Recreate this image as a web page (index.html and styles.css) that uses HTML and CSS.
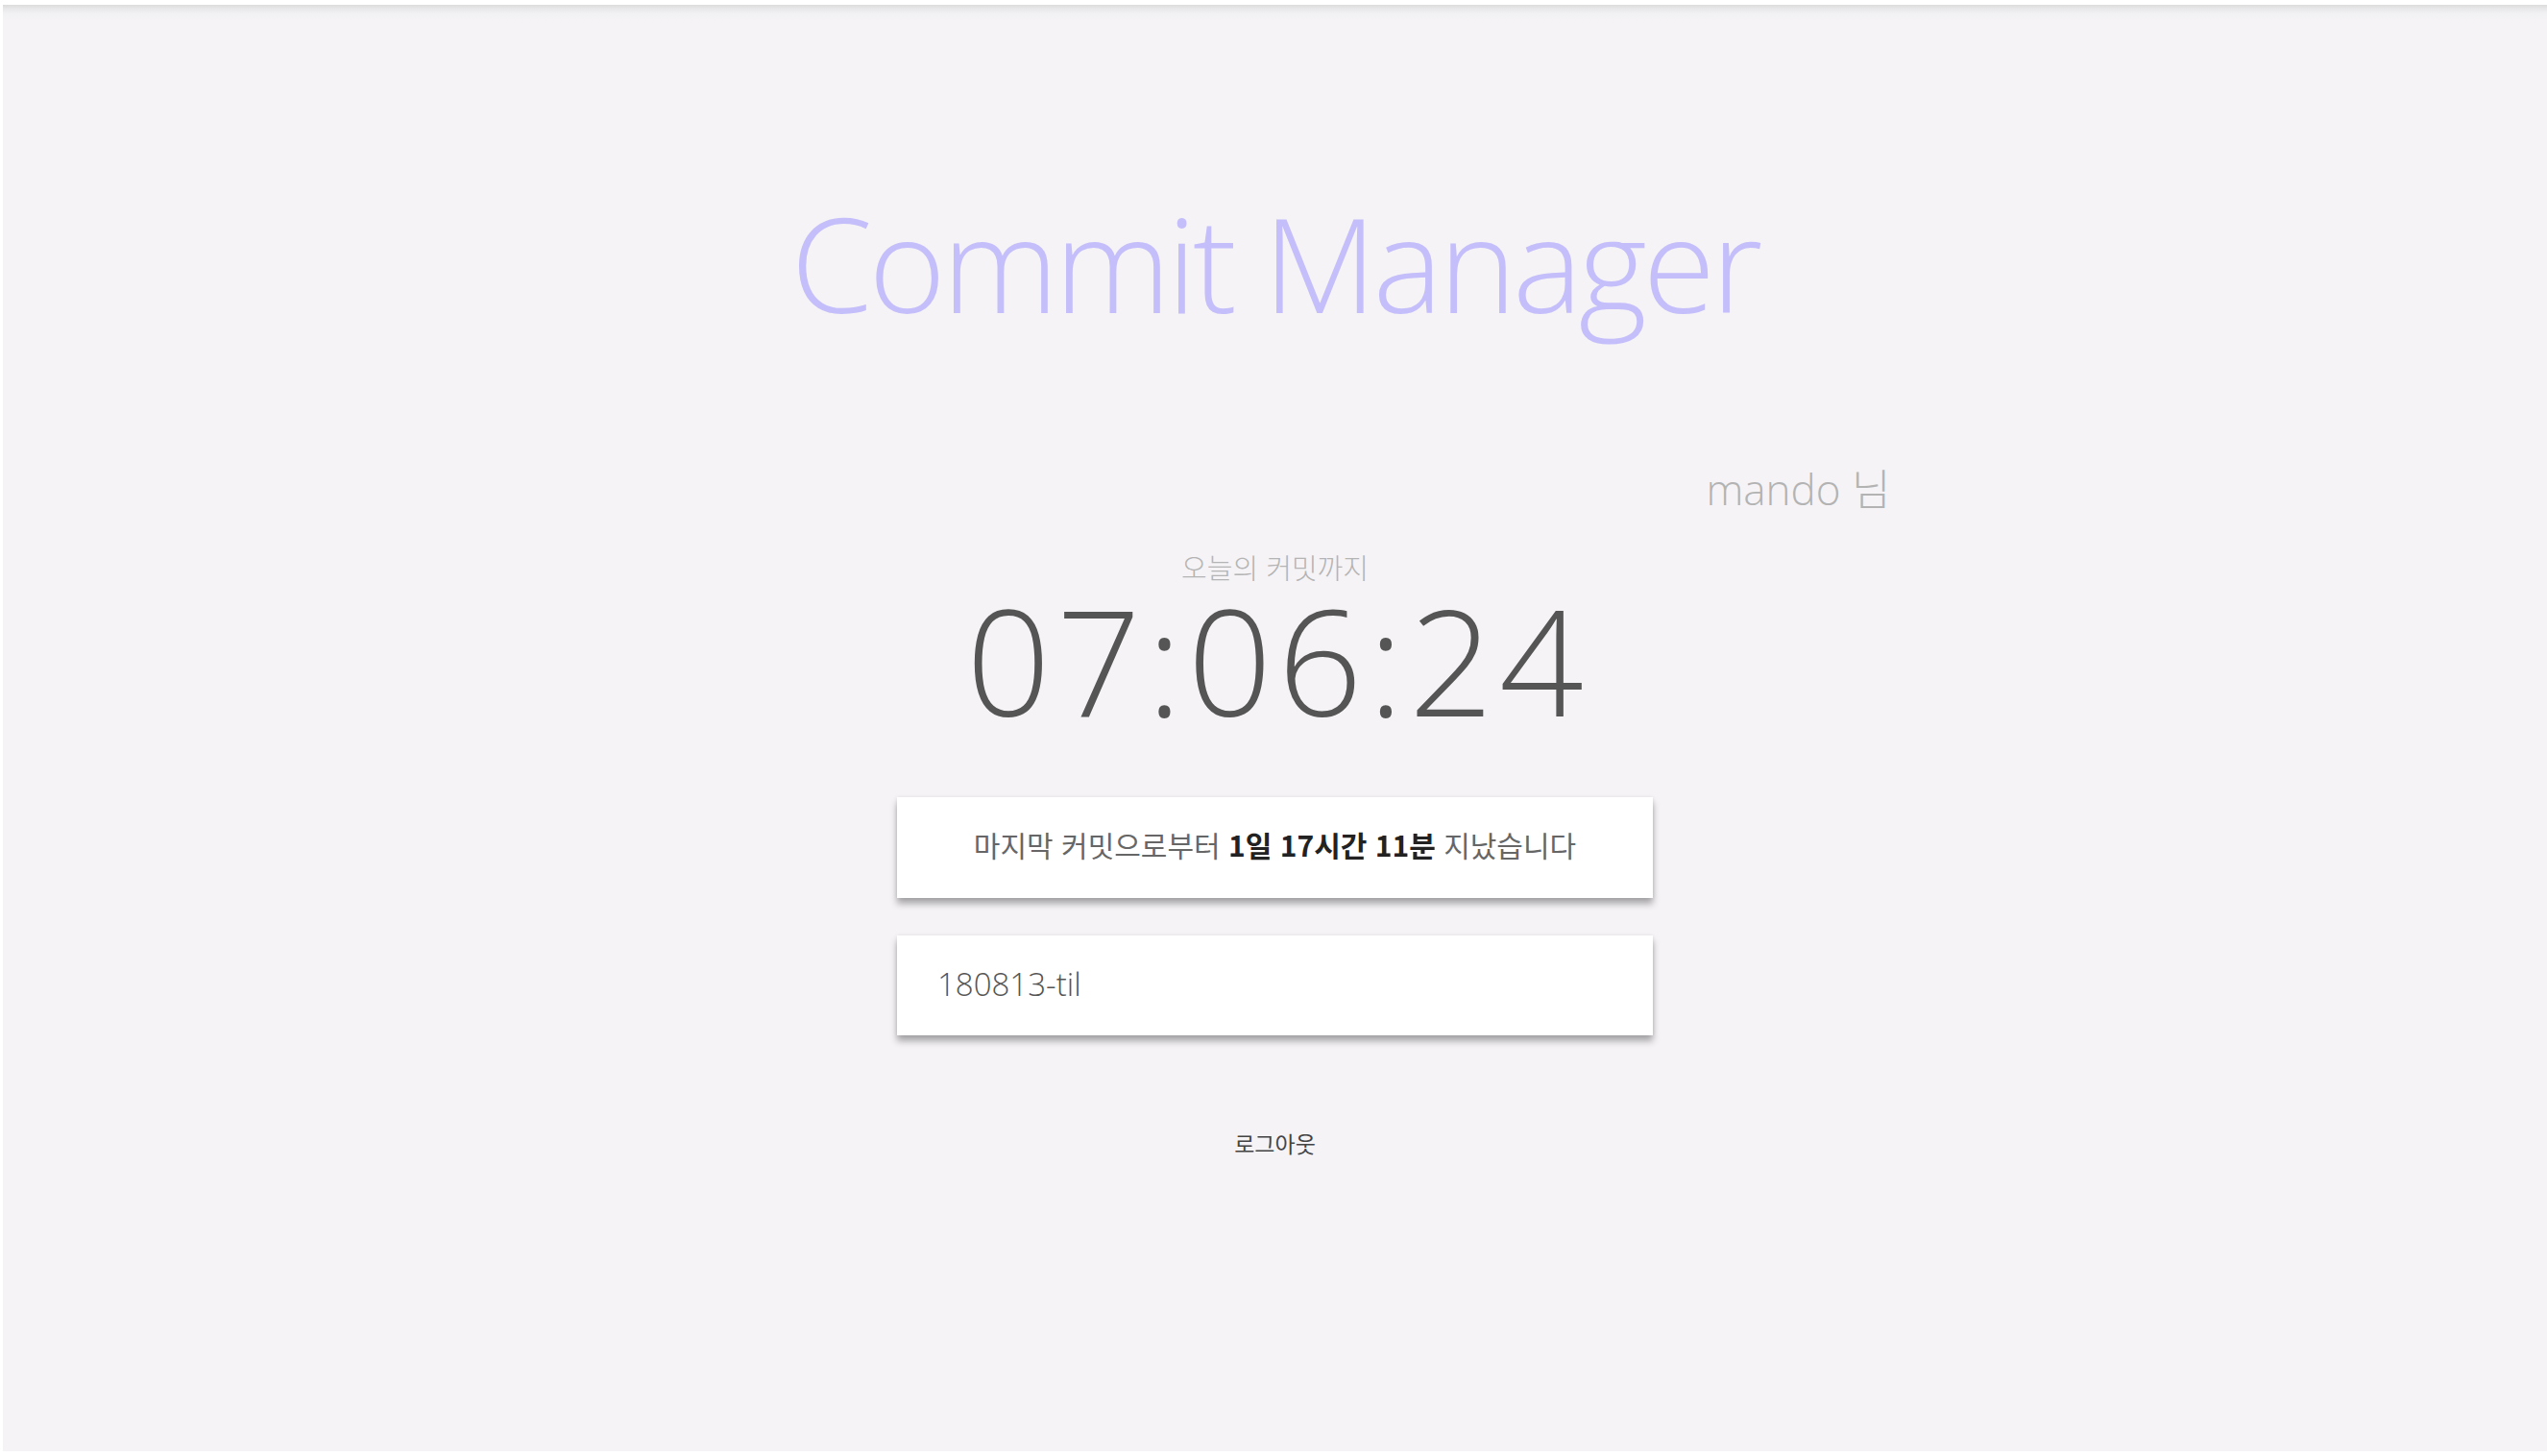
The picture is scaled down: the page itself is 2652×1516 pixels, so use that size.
FILE: index.html
```html
<!DOCTYPE html>
<html lang="ko">
<head>
<meta charset="utf-8">
<title>Commit Manager</title>
<link rel="stylesheet" href="styles.css">
</head>
<body>
<div class="page">
  <main class="main">
    <h1 class="title">Commit Manager</h1>
    <div class="user-row"><span class="user">mando 님</span></div>
    <p class="label">오늘의 커밋까지</p>
    <div class="timer">07:06:24</div>
    <div class="card card-info">마지막 커밋으로부터 <b>1일 17시간 11분</b> 지났습니다</div>
    <div class="card card-repo">180813-til</div>
    <a class="logout">로그아웃</a>
  </main>
</div>
</body>
</html>
```
FILE: styles.css
```css
html, body {
  margin: 0;
  padding: 0;
  background: #ffffff;
}
.page {
  margin: 5px 0 5px 3px;
  height: 1506px;
  background: linear-gradient(to bottom, #dcdcdc 0px, #e8e7e9 4px, #f1f0f2 9px, #f5f3f6 16px);
  overflow: hidden;
}
.main {
  display: flex;
  flex-direction: column;
  align-items: center;
  padding-top: 200px;
}
.title {
  margin: 0;
  font-family: "Open Sans", sans-serif;
  font-weight: 300;
  font-size: 137px;
  line-height: 1;
  color: #c4befa;
  letter-spacing: -4px;
}
.user-row {
  width: 1282px;
  display: flex;
  justify-content: flex-end;
  margin-top: 137px;
}
.user {
  font-family: "Open Sans", "Noto Sans CJK KR", sans-serif;
  font-weight: 300;
  font-size: 44px;
  line-height: 60px;
  color: #b3b3b3;
}
.label {
  margin: 31px 0 0;
  font-family: "Noto Sans CJK KR", sans-serif;
  font-weight: 300;
  font-size: 29px;
  line-height: 40px;
  color: #b4b4b4;
}
.timer {
  margin-top: 16px;
  font-family: "Open Sans", sans-serif;
  font-weight: 300;
  font-size: 154px;
  line-height: 120px;
  color: #555555;
  letter-spacing: 6px;
  padding-left: 6px;
}
.card {
  box-sizing: border-box;
  width: 787px;
  background: #ffffff;
  box-shadow: 0 6px 7px rgba(0, 0, 0, 0.32), 0 0 4px rgba(0, 0, 0, 0.08);
  display: flex;
  align-items: center;
}
.card-info {
  margin-top: 84px;
  height: 105px;
  padding-bottom: 8px;
  justify-content: center;
  font-family: "Noto Sans CJK KR", sans-serif;
  font-weight: 400;
  font-size: 30px;
  color: #666666;
  white-space: pre;
}
.card-info b {
  font-weight: 700;
  color: #222222;
}
.card-repo {
  margin-top: 39px;
  height: 104px;
  padding-left: 42px;
  padding-bottom: 4px;
  font-family: "Open Sans", sans-serif;
  font-weight: 300;
  font-size: 33px;
  color: #555555;
}
.logout {
  margin-top: 97px;
  font-family: "Noto Sans CJK KR", sans-serif;
  font-size: 23px;
  line-height: 30px;
  color: #444444;
  cursor: pointer;
}
```
